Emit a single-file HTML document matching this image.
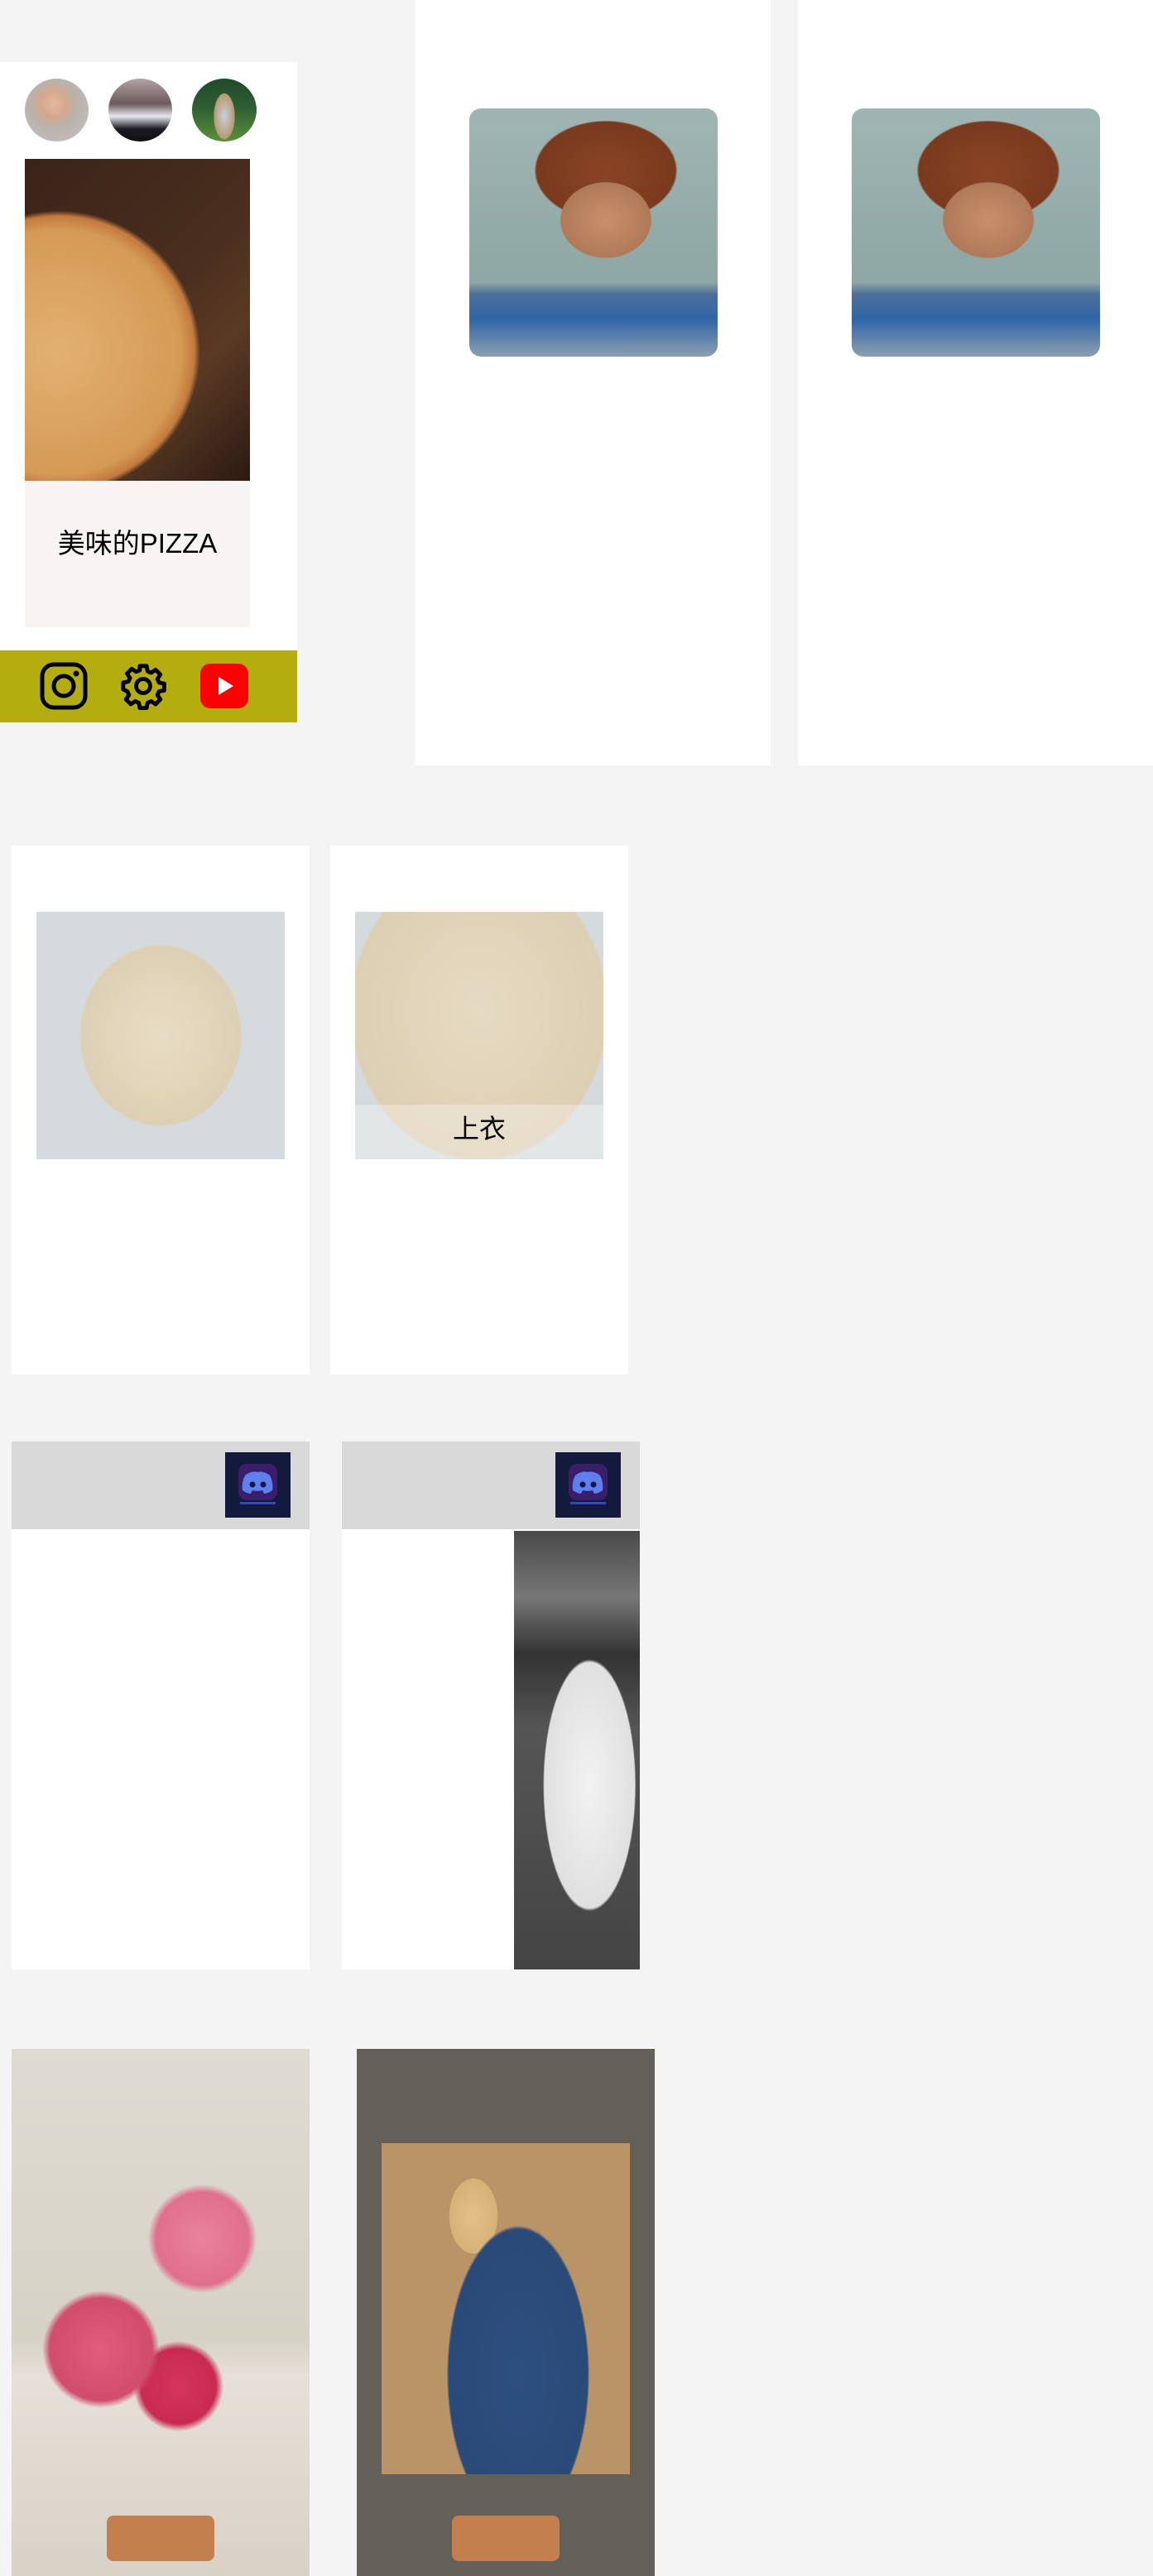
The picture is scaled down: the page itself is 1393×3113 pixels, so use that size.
<!DOCTYPE html>
<html><head><meta charset="utf-8"><style>
*{margin:0;padding:0;box-sizing:border-box}
body{width:1393px;height:3113px;background:#f4f4f4;position:relative;overflow:hidden;font-family:"Liberation Sans","Noto Sans CJK SC",sans-serif}
.a{position:absolute}
.w{background:#fff}
.boy{background:radial-gradient(ellipse 30% 25% at 55% 45%,#c98f6a 0,#b07a58 60%,transparent 62%),radial-gradient(ellipse 40% 28% at 55% 25%,#8a4424 0,#7a3a1e 70%,transparent 72%),linear-gradient(180deg,#9fb5b2 0,#8ea7a4 70%,#4d6e99 75%,#2f66a8 85%,#8ea0b0 100%);border-radius:14px}
.sw{background:radial-gradient(ellipse 40% 45% at 50% 50%,#e8dcc4 0,#ded0b4 80%,transparent 82%),#d5dbdd}
.sw2{background:radial-gradient(ellipse 60% 70% at 50% 40%,#e6dac2 0,#ddcfb3 85%,transparent 87%),#d5dbdd}
</style></head><body>
<!-- card A -->
<div class="a w" style="left:0;top:75px;width:359px;height:711px"></div>
<div class="a" style="left:30px;top:95px;width:77px;height:76px;border-radius:50%;background:radial-gradient(circle at 45% 40%,#e6b9a0 0,#d4a88c 25%,#b9b2aa 45%,#c9c0cc 100%)"></div>
<div class="a" style="left:131px;top:95px;width:77px;height:76px;border-radius:50%;background:linear-gradient(180deg,#b3a3a8 0,#6a5a5a 40%,#e8e8f0 60%,#1a1a22 80%,#111 100%)"></div>
<div class="a" style="left:232px;top:95px;width:78px;height:76px;border-radius:50%;background:radial-gradient(ellipse 20% 45% at 50% 60%,#c9cfd8 0,#b49a72 80%,transparent 82%),linear-gradient(180deg,#1f4a2a 0,#2e5e32 45%,#5c8f3a 100%)"></div>
<div class="a" style="left:30px;top:192px;width:272px;height:389px;background:radial-gradient(circle at 15% 60%,#e2b170 0,#d59a56 45%,#c27a3e 50%,transparent 52%),linear-gradient(135deg,#3a2418 0,#4a2e1e 50%,#5b3a24 70%,#2b1a12 100%)"></div>
<div class="a" style="left:30px;top:581px;width:272px;height:177px;background:#f9f4f4"></div>
<div class="a" style="left:30px;top:632px;width:272px;text-align:center;font-size:33px;line-height:50px;color:#000">美味的PIZZA</div>
<div class="a" style="left:0;top:786px;width:359px;height:87px;background:#b3ad0f"></div>
<svg class="a" style="left:48px;top:800px" width="58" height="58" viewBox="0 0 58 58"><rect x="3" y="3" width="52" height="52" rx="14" fill="none" stroke="#000" stroke-width="5"/><circle cx="29" cy="29" r="12" fill="none" stroke="#000" stroke-width="5"/><circle cx="44" cy="14" r="3.5"/></svg>
<svg class="a" style="left:144px;top:800px" width="58" height="58" viewBox="0 0 24 24"><path d="M12 15.5a3.5 3.5 0 1 0 0-7 3.5 3.5 0 0 0 0 7z" fill="none" stroke="#000" stroke-width="2"/><path d="M10.3 2h3.4l.5 2.6 1.8.8 2.2-1.5 2.4 2.4-1.5 2.2.8 1.8 2.6.5v3.4l-2.6.5-.8 1.8 1.5 2.2-2.4 2.4-2.2-1.5-1.8.8-.5 2.6h-3.4l-.5-2.6-1.8-.8-2.2 1.5-2.4-2.4 1.5-2.2-.8-1.8L2 13.7v-3.4l2.6-.5.8-1.8-1.5-2.2 2.4-2.4 2.2 1.5 1.8-.8z" fill="none" stroke="#000" stroke-width="2" stroke-linejoin="round"/></svg>
<svg class="a" style="left:242px;top:802px" width="58" height="54" viewBox="0 0 58 54"><rect x="0" y="0" width="58" height="54" rx="12" fill="#f00"/><path d="M22 16v22l18-11z" fill="#fff"/></svg>
<!-- card B, C -->
<div class="a w" style="left:502px;top:0;width:429px;height:925px"></div>
<div class="a boy" style="left:567px;top:131px;width:300px;height:300px"></div>
<div class="a w" style="left:964px;top:0;width:429px;height:925px"></div>
<div class="a boy" style="left:1029px;top:131px;width:300px;height:300px"></div>
<!-- row 2 -->
<div class="a w" style="left:14px;top:1022px;width:360px;height:639px"></div>
<div class="a sw" style="left:44px;top:1102px;width:300px;height:299px"></div>
<div class="a w" style="left:399px;top:1022px;width:360px;height:639px"></div>
<div class="a sw2" style="left:429px;top:1102px;width:300px;height:299px"></div>
<div class="a" style="left:429px;top:1335px;width:300px;height:66px;background:rgba(255,255,255,.3)"></div>
<div class="a" style="left:429px;top:1342px;width:300px;text-align:center;font-size:32px;line-height:44px;color:#000">上衣</div>
<!-- row 3 -->
<div class="a w" style="left:14px;top:1742px;width:360px;height:638px"></div>
<div class="a" style="left:14px;top:1742px;width:360px;height:106px;background:#d9d9d9"></div>
<div class="a w" style="left:413px;top:1742px;width:360px;height:638px"></div>
<div class="a" style="left:413px;top:1742px;width:360px;height:106px;background:#d9d9d9"></div>
<svg class="a" style="left:272px;top:1755px" width="79" height="79" viewBox="0 0 79 79"><rect width="79" height="79" fill="#141a3e"/><rect x="16" y="14" width="47" height="44" rx="10" fill="#3a1e6a"/><path d="M24 28c6-5 12-5 15-4 3-1 9-1 15 4 3 6 4 12 3 18-4 3-8 4-10 4l-2-4c-4 1-8 1-12 0l-2 4c-2 0-6-1-10-4-1-6 0-12 3-18z" fill="#5f7ef0"/><circle cx="33" cy="39" r="3.5" fill="#141a3e"/><circle cx="46" cy="39" r="3.5" fill="#141a3e"/><rect x="18" y="60" width="43" height="3" fill="#2a4dbb"/></svg>
<svg class="a" style="left:671px;top:1755px" width="79" height="79" viewBox="0 0 79 79"><rect width="79" height="79" fill="#141a3e"/><rect x="16" y="14" width="47" height="44" rx="10" fill="#3a1e6a"/><path d="M24 28c6-5 12-5 15-4 3-1 9-1 15 4 3 6 4 12 3 18-4 3-8 4-10 4l-2-4c-4 1-8 1-12 0l-2 4c-2 0-6-1-10-4-1-6 0-12 3-18z" fill="#5f7ef0"/><circle cx="33" cy="39" r="3.5" fill="#141a3e"/><circle cx="46" cy="39" r="3.5" fill="#141a3e"/><rect x="18" y="60" width="43" height="3" fill="#2a4dbb"/></svg>
<div class="a" style="left:621px;top:1850px;width:152px;height:530px;background:radial-gradient(ellipse 45% 35% at 60% 58%,#f2f2f2 0,#e0e0e0 80%,transparent 82%),linear-gradient(180deg,#4a4a4a 0,#777 15%,#333 28%,#555 45%,#444 100%)"></div>
<!-- row 4 -->
<div class="a" style="left:14px;top:2476px;width:360px;height:637px;background:radial-gradient(circle at 64% 36%,#e9829c 0,#e06f8c 12%,transparent 14%),radial-gradient(circle at 30% 57%,#e25c7c 0,#d14d6c 14%,transparent 16%),radial-gradient(circle at 56% 64%,#d6345c 0,#c82b52 10%,transparent 12%),linear-gradient(180deg,#dedbd2 0,#d6d2c6 55%,#e6e0d8 62%,#d8d1c6 100%)"></div>
<div class="a" style="left:431px;top:2476px;width:360px;height:637px;background:#626058"></div>
<div class="a" style="left:461px;top:2590px;width:300px;height:400px;background:radial-gradient(ellipse 35% 55% at 55% 70%,#2d4f80 0,#2a4a78 80%,transparent 82%),radial-gradient(ellipse 12% 14% at 37% 22%,#e2c08a 0,#d6b276 80%,transparent 82%),#b89466"></div>
<div class="a" style="left:129px;top:3040px;width:130px;height:55px;border-radius:8px;background:#c47f4e"></div>
<div class="a" style="left:546px;top:3040px;width:130px;height:55px;border-radius:8px;background:#c47f4e"></div>
</body></html>
